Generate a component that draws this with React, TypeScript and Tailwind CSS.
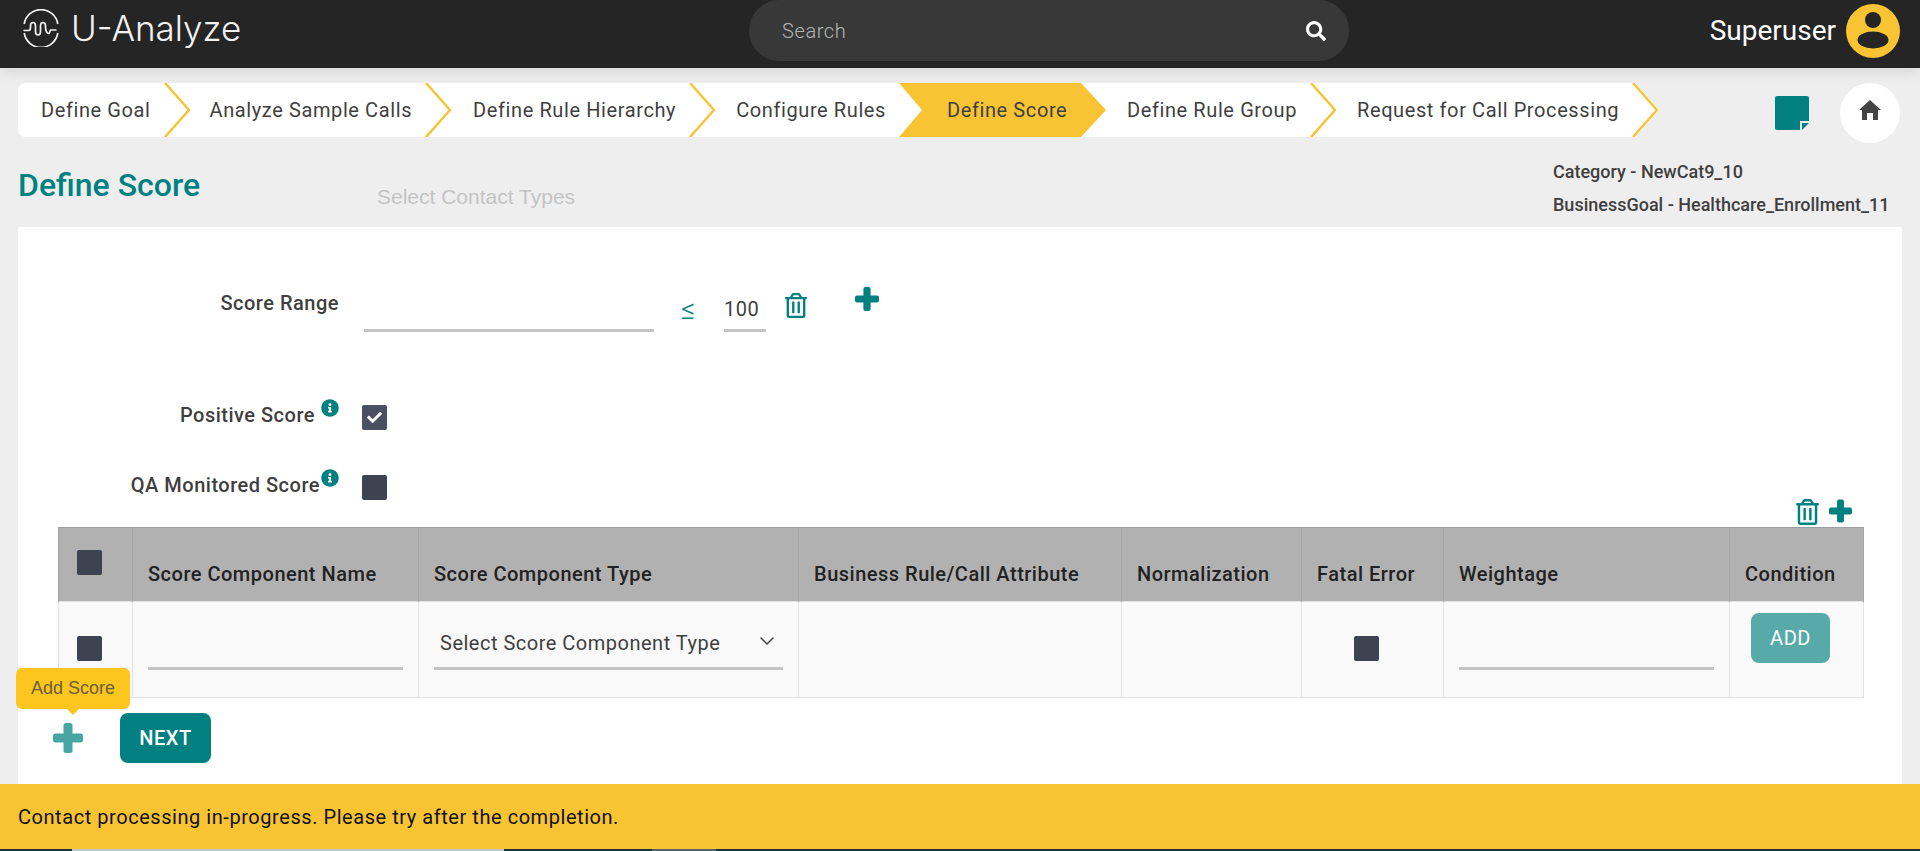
import { ChevronDown } from 'lucide-react';
import { FaCheck, FaInfoCircle, FaRegTrashAlt, FaSearch } from 'react-icons/fa';

const steps = [
  { label: 'Define Goal', pad: 'pl-[23px]', chevron: true },
  { label: 'Analyze Sample Calls', pad: 'pl-[19px]', chevron: true },
  { label: 'Define Rule Hierarchy', pad: 'pl-[21px]', chevron: true },
  { label: 'Configure Rules', pad: 'pl-[20px]', chevron: false },
  { label: 'Define Score', active: true },
  { label: 'Define Rule Group', pad: 'pl-[21px]', chevron: true },
  { label: 'Request for Call Processing', pad: 'pl-[20px]', chevron: true },
];

const StepChevron = () => (
  <svg width="27" height="54" viewBox="0 0 27 54" className="ml-[13px] shrink-0" fill="none">
    <path d="M1 0 L25 27 L1 54" stroke="#f8c434" strokeWidth="2.5" strokeLinejoin="round" />
  </svg>
);

const Logo = () => (
  <svg width="38" height="38" viewBox="0 0 38 38" fill="none" stroke="#f2f2f2" strokeWidth="1.7">
    <path d="M2.200 15a17 17 0 0 1 33.600 0M35.800 24a17 17 0 0 1-33.600 0" />
    <path d="M1.500 21.500h5c1.500 0 2-1 2-3v-1.500c0-2 1-3.500 2.500-3.500s2.500 1.500 2.500 3.500v5.500c0 2 1 3.500 2.500 3.500s2.500-1.500 2.500-3.500v-5.500c0-2 1-3.500 2.500-3.500s2.500 1.500 2.500 3.500v1.500c0 3 1.500 6 3 6s1.500-3 2-3.500h6" />
  </svg>
);

const Avatar = () => (
  <svg width="54" height="54" viewBox="0 0 54 54" className="shrink-0">
    <circle cx="27" cy="27" r="27" fill="#f8c434" />
    <circle cx="27" cy="16" r="8" fill="#252525" />
    <ellipse cx="27" cy="36" rx="15.500" ry="8.500" fill="#252525" />
  </svg>
);

const NoteIcon = () => (
  <svg width="34" height="34" viewBox="0 0 34 34">
    <rect width="34" height="34" rx="2" fill="#008080" />
    <rect x="25" y="25" width="9" height="9" fill="#eeeeee" />
    <path d="M27 27h7l-7 7z" fill="#008080" />
  </svg>
);

const HomeIcon = () => (
  <svg width="22" height="20" viewBox="0 0 22 20" fill="#444444" className="-mt-[6px]">
    <path d="M11 0l11 10h-3v10h-5v-7H8v7H3V10H0z" />
  </svg>
);

const PlusIcon = ({ className }: { className: string }) => (
  <svg viewBox="0 0 30 30" fill="currentColor" className={className}>
    <rect x="10.500" width="9" height="30" rx="2.500" />
    <rect y="10.500" width="30" height="9" rx="2.500" />
  </svg>
);

const Checkbox = ({ checked = false }: { checked?: boolean }) => (
  <span
    className={`flex h-[25px] w-[25px] items-center justify-center rounded-[2px] ${
      checked ? 'bg-[#4b5162]' : 'bg-[#3e4351]'
    }`}
  >
    {checked && <FaCheck className="h-[15px] w-[15px] text-white" />}
  </span>
);

const Underline = ({ className }: { className: string }) => (
  <div className={`h-[3px] bg-[#c4c4c4] ${className}`} />
);

const Th = ({ children }: React.PropsWithChildren) => (
  <th className="border-x border-[#a6a6a6] px-[15px] pt-[34px] pb-[14px] text-left leading-[25px] font-medium text-[#222]">
    {children}
  </th>
);

const Td = ({ children, className = '' }: React.PropsWithChildren<{ className?: string }>) => (
  <td className={`border border-[#e2e2e2] px-[15px] align-top ${className}`}>{children}</td>
);

const Header = () => (
  <header className="relative z-10 flex h-[68px] shrink-0 items-start bg-[#252525] shadow-[0_4px_14px_rgba(0,0,0,0.1)]">
    <div className="flex w-[749px] items-center pt-[9px] pl-[22px]">
      <Logo />
      <span className="ml-[11px] font-['Inter',sans-serif] text-[35px] leading-[38px] font-light tracking-normal text-[#f2f2f2]">
        U-Analyze
      </span>
    </div>
    <div className="flex h-[61px] w-[600px] items-center justify-between rounded-full bg-[#383838] pr-[23px] pl-[33px]">
      <span className="text-[20px] font-light text-[#b4b4b4]">Search</span>
      <FaSearch className="h-[20px] w-[20px] text-white" />
    </div>
    <div className="flex flex-1 items-center justify-end gap-[10px] pt-[4px] pr-[20px]">
      <span className="text-[28px] tracking-normal text-white">Superuser</span>
      <Avatar />
    </div>
  </header>
);

const Stepper = () => (
  <nav className="mt-[15px] flex h-[54px] w-max items-center rounded-l-[8px] bg-white whitespace-nowrap [clip-path:polygon(0_0,calc(100%-24px)_0,100%_50%,calc(100%-24px)_100%,0_100%)]">
    {steps.map((s) =>
      s.active ? (
        <div
          key={s.label}
          className="ml-[13px] flex h-[54px] w-[207px] items-center bg-[#f8c434] pl-[48px] [clip-path:polygon(0_0,182px_0,207px_50%,182px_100%,0_100%,23px_50%)]"
        >
          {s.label}
        </div>
      ) : (
        <div key={s.label} className={`flex h-[54px] items-center ${s.pad}`}>
          <span>{s.label}</span>
          {s.chevron && <StepChevron />}
        </div>
      ),
    )}
  </nav>
);

export default function App() {
  return (
    <div className="flex h-[851px] flex-col overflow-hidden bg-[#eeeeee] font-['Roboto',sans-serif] text-[20px] tracking-[0.6px] text-[#3f3f3f]">
      <Header />

      <main className="flex min-h-0 flex-1 flex-col px-[18px]">
        <div className="flex items-start">
          <div className="w-[1640px]">
            <Stepper />
          </div>
          <div className="flex flex-1 items-center justify-between pt-[15px] pr-[2px] pl-[117px]">
            <NoteIcon />
            <div className="flex h-[60px] w-[60px] items-center justify-center rounded-full bg-white">
              <HomeIcon />
            </div>
          </div>
        </div>

        <div className="flex h-[84px] items-start tracking-normal">
          <h1 className="mt-[20px] w-[359px] text-[32px] leading-[44px] font-medium text-[#008080]">Define Score</h1>
          <span className="mt-[38px] w-[1176px] font-['Liberation_Sans',sans-serif] text-[21px] text-[#c4c4c4]">
            Select Contact Types
          </span>
          <div className="mt-[12px] text-[18px] leading-[33px] font-medium">
            <p>Category - NewCat9_10</p>
            <p className="whitespace-nowrap">BusinessGoal - Healthcare_Enrollment_11</p>
          </div>
        </div>

        <section className="relative flex-1 bg-white pt-[60px] pl-[40px] font-medium tracking-[0.5px]">
          <div className="flex items-start">
            <span className="mt-[3px] w-[281px] text-right leading-[26px]">Score Range</span>
            <div className="mt-[42px] ml-[25px] w-[290px]">
              <Underline className="w-full" />
            </div>
            <span className="mt-[2px] ml-[27px] w-[12px] text-[28px] font-light tracking-normal text-[#008080]">≤</span>
            <div className="mt-[8px] ml-[31px] w-[42px] font-normal">
              <span className="block h-[34px] leading-[28px]">100</span>
              <Underline className="w-full" />
            </div>
            <FaRegTrashAlt className="mt-[6px] ml-[19px] h-[25px] w-[22px] text-[#008080]" />
            <PlusIcon className="ml-[48px] h-[24px] w-[24px] text-[#008080]" />
          </div>

          <div className="mt-[71px] flex items-start">
            <span className="-mt-[4px] w-[281px] pt-[3px] text-right leading-[26px]">
              Positive Score
              <FaInfoCircle className="relative -top-[9px] ml-[6px] inline h-[18px] w-[18px] text-[#008080]" />
            </span>
            <span className="mt-[2px] ml-[23px]">
              <Checkbox checked />
            </span>
          </div>

          <div className="mt-[43px] flex items-start">
            <span className="-mt-[4px] w-[281px] pt-[3px] text-right leading-[26px]">
              QA Monitored Score
              <FaInfoCircle className="relative -top-[9px] ml-px inline h-[18px] w-[18px] text-[#008080]" />
            </span>
            <span className="mt-[2px] ml-[23px]">
              <Checkbox />
            </span>
          </div>

          <div className="-mt-[1px] flex justify-end gap-[10px] pr-[50px]">
            <FaRegTrashAlt className="h-[26px] w-[23px] text-[#008080]" />
            <PlusIcon className="h-[24px] w-[23px] text-[#008080]" />
          </div>

          <table className="mt-[2px] w-[1805px] table-fixed border-collapse">
            <colgroup>
              <col className="w-[74px]" />
              <col className="w-[286px]" />
              <col className="w-[380px]" />
              <col className="w-[323px]" />
              <col className="w-[180px]" />
              <col className="w-[142px]" />
              <col className="w-[286px]" />
              <col className="w-[134px]" />
            </colgroup>
            <thead>
              <tr className="h-[73px] border-y border-[#9e9e9e] bg-[#b1b1b1]">
                <th className="border-x border-[#a6a6a6] pb-[4px] pl-[18px] align-middle">
                  <Checkbox />
                </th>
                <Th>Score Component Name</Th>
                <Th>Score Component Type</Th>
                <Th>Business Rule/Call Attribute</Th>
                <Th>Normalization</Th>
                <Th>Fatal Error</Th>
                <Th>Weightage</Th>
                <Th>Condition</Th>
              </tr>
            </thead>
            <tbody>
              <tr className="h-[96px] bg-[#f9f9f9]">
                <td className="border border-[#e2e2e2] pt-[34px] pl-[18px] align-top">
                  <Checkbox />
                </td>
                <Td className="pt-[65px]">
                  <Underline className="w-full" />
                </Td>
                <Td className="pt-[21px]">
                  <div className="flex h-[44px] items-center justify-between pr-[4px] pb-[4px] pl-[6px] font-normal">
                    <span>Select Score Component Type</span>
                    <ChevronDown className="h-[24px] w-[24px] -translate-y-[2px] text-[#444]" strokeWidth={1.5} />
                  </div>
                  <Underline className="w-full" />
                </Td>
                <Td />
                <Td />
                <td className="border border-[#e2e2e2] pt-[34px] pl-[52px] align-top">
                  <Checkbox />
                </td>
                <Td className="pt-[65px]">
                  <Underline className="w-full" />
                </Td>
                <td className="border border-[#e2e2e2] pt-[11px] pl-[21px] align-top">
                  <button className="flex h-[50px] w-[79px] items-center justify-center rounded-[8px] bg-[#58aaa9] font-normal text-white">
                    ADD
                  </button>
                </td>
              </tr>
            </tbody>
          </table>

          <div className="mt-[15px] -ml-[5px] flex items-center gap-[37px]">
            <div className="relative">
              <PlusIcon className="h-[30px] w-[30px] text-[#47a6a4]" />
              <div className="absolute -top-[55px] -left-[37px] flex h-[41px] w-[114px] items-center justify-center rounded-[6px] bg-[#fdc61f] font-['Liberation_Sans',sans-serif] text-[18px] font-normal tracking-normal text-[#6a5f35] after:absolute after:top-full after:left-1/2 after:-ml-[6px] after:border-x-[6px] after:border-t-[6px] after:border-x-transparent after:border-t-[#fdc61f]">
                Add Score
              </div>
            </div>
            <button className="flex h-[50px] w-[91px] items-center justify-center rounded-[8px] bg-[#008080] font-medium text-white">
              NEXT
            </button>
          </div>
        </section>
      </main>

      <div className="flex h-[65px] shrink-0 items-center bg-[#f8c434] pl-[18px] tracking-[0.55px] text-[#111]">
        Contact processing in-progress. Please try after the completion.
      </div>
      <div className="flex h-[2px] shrink-0">
        <div className="w-[72px] bg-[#1f3038]" />
        <div className="w-[432px] bg-[#c4c4c4]" />
        <div className="w-[148px] bg-[#1f3038]" />
        <div className="w-[64px] bg-[#596067]" />
        <div className="flex-1 bg-[#1f3038]" />
      </div>
    </div>
  );
}
